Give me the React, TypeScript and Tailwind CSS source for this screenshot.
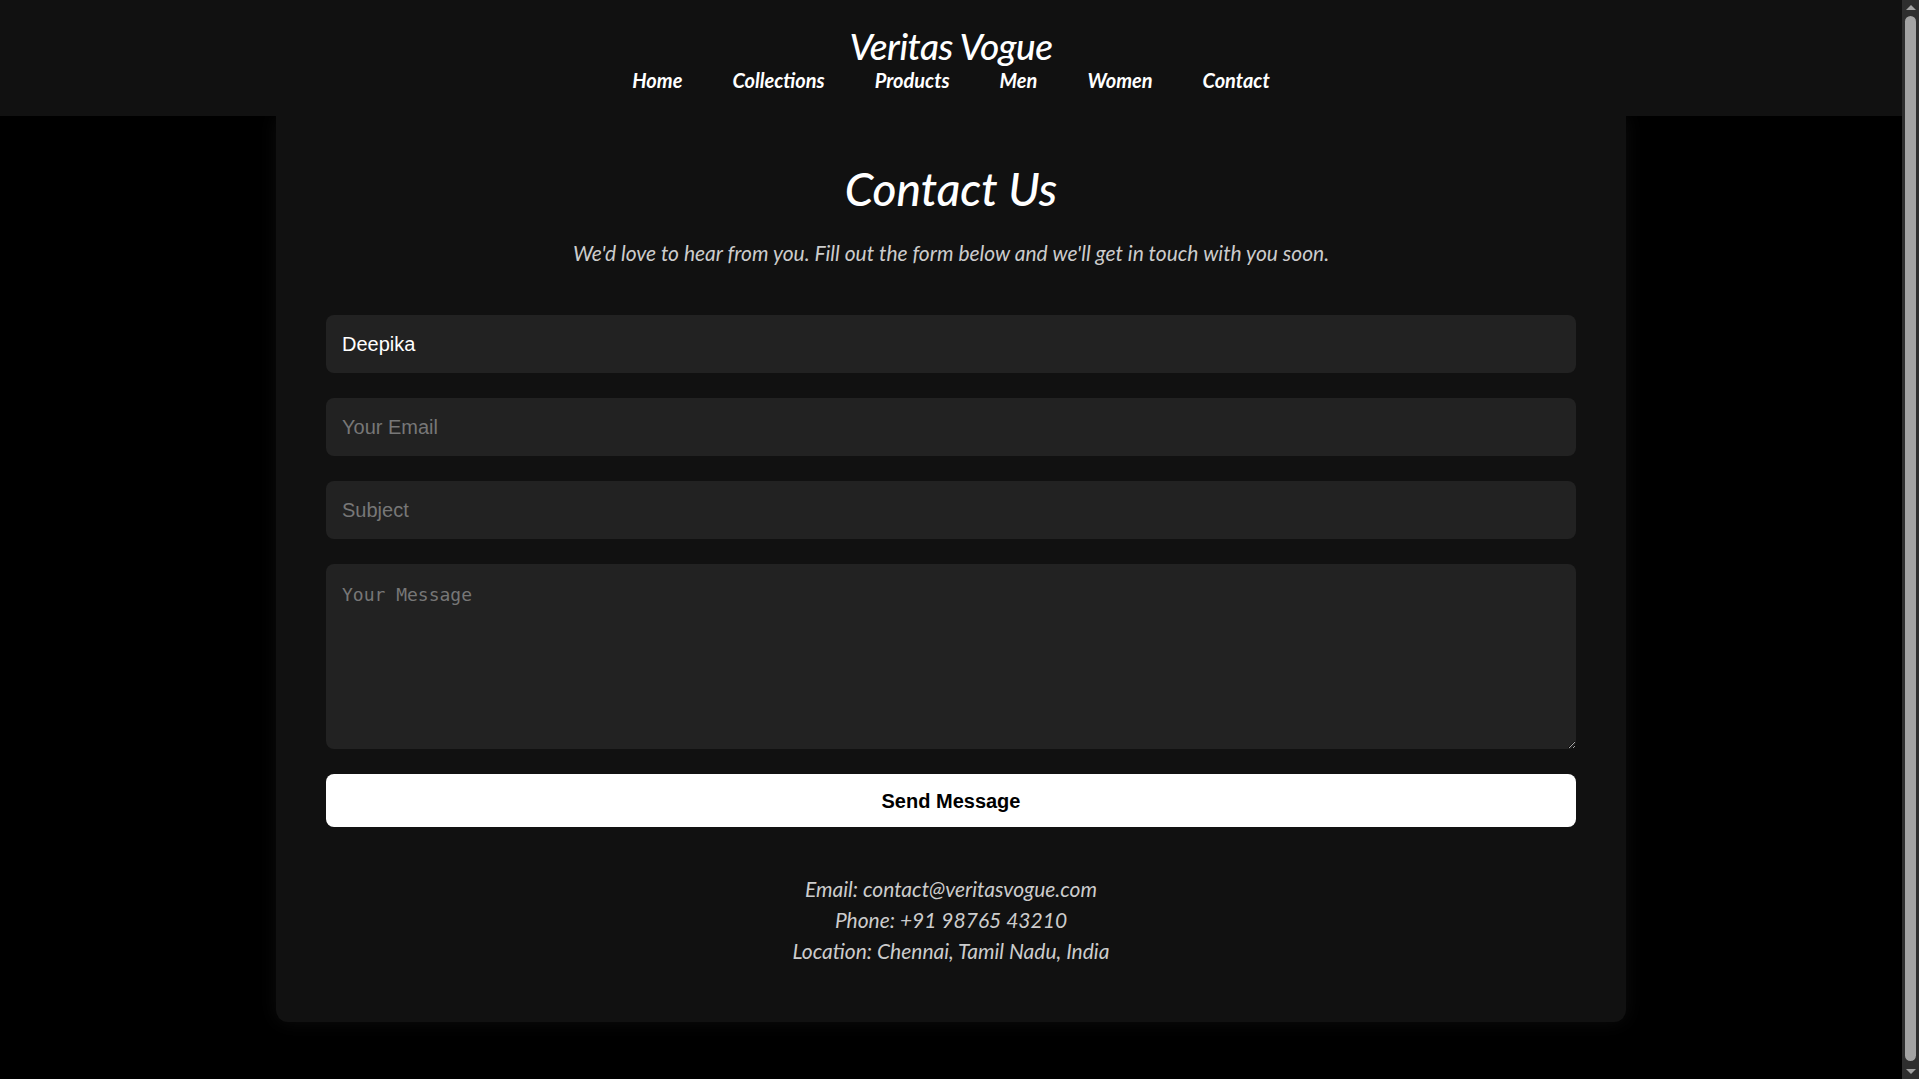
import React from 'react';

const navLinks = ['Home', 'Collections', 'Products', 'Men', 'Women', 'Contact'];

const futura = "font-['Lato','Open_Sans',sans-serif] italic";

const fieldClass =
  "block w-full h-[58px] rounded-[8px] bg-[#222] px-[16px] text-[20px] text-white font-['Liberation_Sans',Arial,sans-serif] placeholder:text-[#777] outline-none";

const Header = () => (
  <header className="relative z-10 h-[116px] bg-[#111] pt-[27px] flex flex-col items-center">
    <h1
      className={`${futura} text-[37px] leading-[37px] font-medium tracking-[-0.5px] text-white`}
    >
      Veritas Vogue
    </h1>
    <nav className="mt-[6px] flex gap-[50px]">
      {navLinks.map((link) => (
        <a
          key={link}
          href="#"
          className={`${futura} text-[20px] leading-[20px] font-bold text-white`}
        >
          {link}
        </a>
      ))}
    </nav>
  </header>
);

const ContactForm = () => (
  <form className="flex flex-col gap-[25px]" onSubmit={(e) => e.preventDefault()}>
    <input type="text" className={fieldClass} defaultValue="Deepika" />
    <input type="email" className={fieldClass} placeholder="Your Email" />
    <input type="text" className={fieldClass} placeholder="Subject" />
    <textarea
      className="block w-full h-[185px] rounded-[8px] bg-[#222] px-[16px] pt-[20px] text-[18px] leading-[21px] text-white font-['DejaVu_Sans_Mono',monospace] placeholder:text-[#777] outline-none"
      placeholder="Your Message"
    />
    <button
      type="submit"
      className="h-[53px] w-full rounded-[8px] bg-white text-[20px] font-bold text-black font-['Liberation_Sans',Arial,sans-serif]"
    >
      Send Message
    </button>
  </form>
);

// browser scrollbar, as seen in the screenshot
const Scrollbar = () => (
  <div className="fixed right-0 top-0 z-20 flex h-screen w-[17px] flex-col items-center bg-[#2e2e2e]">
    <div className="mt-[5px] h-0 w-0 border-x-[5px] border-b-[5px] border-x-transparent border-b-[#a3a3a3]" />
    <div className="mt-[6px] w-[11px] flex-1 rounded-full bg-[#a3a3a3]" />
    <div className="mb-[5px] mt-[8px] h-0 w-0 border-x-[5px] border-t-[5px] border-x-transparent border-t-[#a3a3a3]" />
  </div>
);

export default function App() {
  return (
    <div className="min-h-screen bg-black">
      <div className="mr-[17px] pb-[88px]">
        <Header />
        <main className="mx-auto w-[1350px] rounded-b-[12px] bg-[#111] px-[50px] pt-[50px] pb-[56px] shadow-[0_0_20px_rgba(255,255,255,0.05)]">
          <h2
            className={`${futura} text-center text-[46px] leading-[46px] font-medium text-white`}
          >
            Contact Us
          </h2>
          <p className={`${futura} mt-[30px] text-center text-[21px] leading-[21px] text-[#ccc]`}>
            We'd love to hear from you. Fill out the form below and we'll get in touch with you soon.
          </p>
          <div className="mt-[52px]">
            <ContactForm />
          </div>
          <div className={`${futura} mt-[46px] text-center text-[21px] leading-[31px] text-[#ccc]`}>
            <p>Email: contact@veritasvogue.com</p>
            <p>Phone: +91 98765 43210</p>
            <p>Location: Chennai, Tamil Nadu, India</p>
          </div>
        </main>
      </div>
      <Scrollbar />
    </div>
  );
}
